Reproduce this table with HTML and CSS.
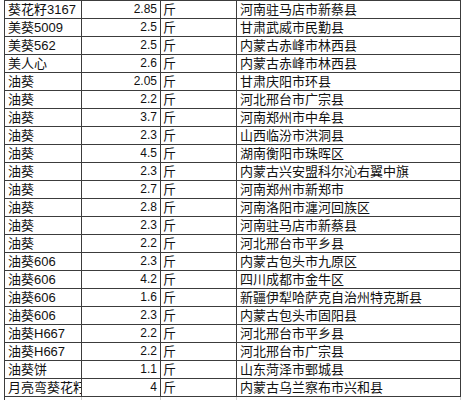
FILE: index.html
```html
<!DOCTYPE html>
<html lang="zh-CN">
<head>
<meta charset="utf-8">
<title>葵花籽价格表</title>
<link rel="stylesheet" href="styles.css">
</head>
<body>
<div class="sheet">
  <div class="c name">葵花籽3167</div><div class="c num">2.85</div><div class="c unit">斤</div><div class="c place">河南驻马店市新蔡县</div>
  <div class="c name">美葵5009</div><div class="c num">2.5</div><div class="c unit">斤</div><div class="c place">甘肃武威市民勤县</div>
  <div class="c name">美葵562</div><div class="c num">2.5</div><div class="c unit">斤</div><div class="c place">内蒙古赤峰市林西县</div>
  <div class="c name">美人心</div><div class="c num">2.6</div><div class="c unit">斤</div><div class="c place">内蒙古赤峰市林西县</div>
  <div class="c name">油葵</div><div class="c num">2.05</div><div class="c unit">斤</div><div class="c place">甘肃庆阳市环县</div>
  <div class="c name">油葵</div><div class="c num">2.2</div><div class="c unit">斤</div><div class="c place">河北邢台市广宗县</div>
  <div class="c name">油葵</div><div class="c num">3.7</div><div class="c unit">斤</div><div class="c place">河南郑州市中牟县</div>
  <div class="c name">油葵</div><div class="c num">2.3</div><div class="c unit">斤</div><div class="c place">山西临汾市洪洞县</div>
  <div class="c name">油葵</div><div class="c num">4.5</div><div class="c unit">斤</div><div class="c place">湖南衡阳市珠晖区</div>
  <div class="c name">油葵</div><div class="c num">2.3</div><div class="c unit">斤</div><div class="c place">内蒙古兴安盟科尔沁右翼中旗</div>
  <div class="c name">油葵</div><div class="c num">2.7</div><div class="c unit">斤</div><div class="c place">河南郑州市新郑市</div>
  <div class="c name">油葵</div><div class="c num">2.8</div><div class="c unit">斤</div><div class="c place">河南洛阳市瀍河回族区</div>
  <div class="c name">油葵</div><div class="c num">2.3</div><div class="c unit">斤</div><div class="c place">河南驻马店市新蔡县</div>
  <div class="c name">油葵</div><div class="c num">2.2</div><div class="c unit">斤</div><div class="c place">河北邢台市平乡县</div>
  <div class="c name">油葵606</div><div class="c num">2.3</div><div class="c unit">斤</div><div class="c place">内蒙古包头市九原区</div>
  <div class="c name">油葵606</div><div class="c num">4.2</div><div class="c unit">斤</div><div class="c place">四川成都市金牛区</div>
  <div class="c name">油葵606</div><div class="c num">1.6</div><div class="c unit">斤</div><div class="c place">新疆伊犁哈萨克自治州特克斯县</div>
  <div class="c name">油葵606</div><div class="c num">2.3</div><div class="c unit">斤</div><div class="c place">内蒙古包头市固阳县</div>
  <div class="c name">油葵H667</div><div class="c num">2.2</div><div class="c unit">斤</div><div class="c place">河北邢台市平乡县</div>
  <div class="c name">油葵H667</div><div class="c num">2.2</div><div class="c unit">斤</div><div class="c place">河北邢台市广宗县</div>
  <div class="c name">油葵饼</div><div class="c num">1.1</div><div class="c unit">斤</div><div class="c place">山东菏泽市鄄城县</div>
  <div class="c name">月亮弯葵花籽</div><div class="c num">4</div><div class="c unit">斤</div><div class="c place">内蒙古乌兰察布市兴和县</div>
  <div class="c ghost"></div><div class="c ghost"></div><div class="c ghost"></div><div class="c ghost"></div>
</div>
</body>
</html>
```
FILE: styles.css
```css
html, body {
  margin: 0;
  padding: 0;
  background: #ffffff;
}
body {
  font-family: "Liberation Sans", "Noto Sans CJK SC", sans-serif;
  font-size: 13px;
  color: #111111;
  overflow: hidden;
}
.sheet {
  display: grid;
  grid-template-columns: 77px 79px 76px 224px;
  grid-auto-rows: 18px;
  margin-left: 4px;
  width: max-content;
  border-left: 1px solid #3c3c3c;
  border-top: 1px solid #3c3c3c;
}
.c {
  box-sizing: border-box;
  border-right: 1px solid #3c3c3c;
  border-bottom: 1px solid #3c3c3c;
  line-height: 17px;
  white-space: nowrap;
  overflow: hidden;
}
.name {
  padding-left: 3px;
}
.num {
  font-size: 12px;
  text-align: right;
  padding-right: 3px;
}
.unit {
  padding-left: 2px;
}
.place {
  padding-left: 3px;
}
.ghost {
  border-right-color: #d0d0d0;
  border-bottom: none;
}
```
